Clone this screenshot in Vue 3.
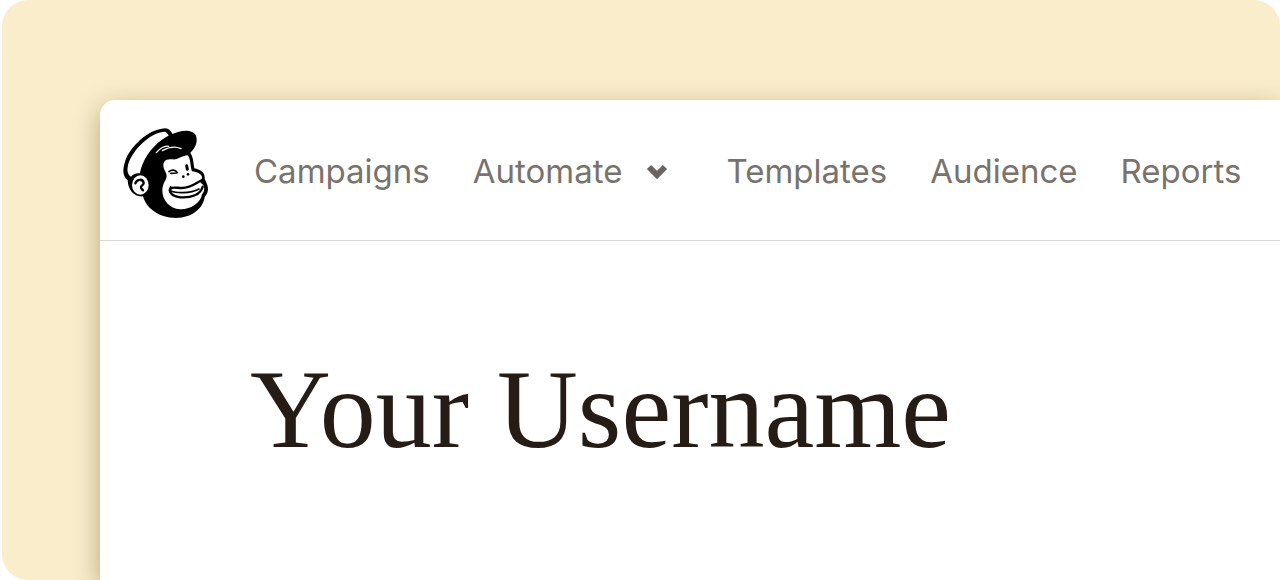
<template>
  <div class="backdrop">
    <div class="window">
      <header class="topbar">
        <a href="#" class="brand" aria-label="Home">
          <svg class="brand-logo" viewBox="0 0 300 315" aria-hidden="true">
            <!-- Head and cap -->
            <path
              d="M150 25C161 25 168 34 173 42C197 30 233 26 243 47C250 68 238 87 226 98C236 114 235 131 238 145C254 149 270 156 269 173C268 180 280 191 279 209C278 221 271 227 269 232C264 262 235 294 182 294C136 294 94 267 84 229C59 232 39 212 38 181C23 168 22 150 30 125C44 82 98 28 150 25Z"
            />
            <!-- Cap band -->
            <path
              fill="#fff"
              d="M147 35C154 35 159 41 161 47C126 63 84 108 75 160C63 158 54 163 48 170C36 163 35 148 41 128C54 91 102 39 147 35Z"
            />
            <path class="light" d="M124 98C137 83 151 77 161 79M142 92C158 83 180 78 198 86" />
            <!-- Face -->
            <path
              fill="#fff"
              d="M146 143C142 126 151 116 170 118C190 121 201 106 218 106C228 117 225 137 231 154C246 156 260 162 261 172C261 180 252 184 258 190C270 195 271 215 261 223C258 248 228 269 195 268C164 266 141 240 142 210C143 191 151 184 154 174C158 160 148 153 146 143Z"
            />
            <!-- Ear -->
            <ellipse cx="76" cy="195" rx="25" ry="29" fill="#fff" />
            <path class="line" d="M61 190C65 176 84 176 86 189C86 196 78 196 78 201C77 207 82 207 84 211" />
            <!-- Eyes and nose -->
            <path class="line thin" d="M162 155C170 148 182 149 187 158M168 160L184 159" />
            <path class="line eye" d="M215 137L217 148" />
            <circle cx="205" cy="170" r="4" />
            <circle cx="219" cy="163" r="4" />
            <!-- Mouth -->
            <path class="line" d="M261 180C245 188 226 205 198 204C187 204 174 200 168 205C159 216 172 230 197 232C229 234 257 224 263 200" />
            <path class="line thin" d="M168 213C182 219 224 222 252 207M167 200L163 211" />
          </svg>
        </a>
        <nav class="menu">
          <template v-for="item in items" :key="item.label">
            <button v-if="item.dropdown" type="button" class="menu-item menu-dropdown">
              {{ item.label }}
              <svg class="chevron" viewBox="0 0 22 16" aria-hidden="true">
                <path d="M3 4L11 12L19 4" />
              </svg>
            </button>
            <a v-else href="#" class="menu-item">{{ item.label }}</a>
          </template>
        </nav>
      </header>
      <main class="content">
        <h1 class="username">Your Username</h1>
      </main>
    </div>
  </div>
</template>

<script setup>
const items = [
  { label: 'Campaigns' },
  { label: 'Automate', dropdown: true },
  { label: 'Templates' },
  { label: 'Audience' },
  { label: 'Reports' }
]
</script>

<style>
body {
  background: #fff;
}
</style>

<style scoped>
.backdrop {
  box-sizing: border-box;
  display: flex;
  min-height: 100vh;
  margin-left: 2px;
  padding: 100px 0 0 98px;
  background: #faedcb;
  border-radius: 26px 26px 0 26px;
  overflow: hidden;
}

.window {
  flex: 1;
  min-width: 0;
  background: #fff;
  border-top-left-radius: 15px;
  box-shadow: 0 8px 27px rgba(60, 50, 10, 0.38);
}

.topbar {
  display: flex;
  align-items: center;
  gap: 39px;
  height: 136px;
  padding: 4px 0 0 15px;
  border-bottom: 1px solid #d9d9d9;
}

.brand {
  flex-shrink: 0;
  color: #000;
}

.brand-logo {
  display: block;
  width: 100px;
  height: 105px;
}

.line,
.light {
  fill: none;
  stroke: #000;
  stroke-width: 7;
  stroke-linecap: round;
  stroke-linejoin: round;
}

.light {
  stroke: #fff;
  stroke-width: 4;
}

.thin {
  stroke-width: 5;
}

.eye {
  stroke-width: 9;
}

.menu {
  display: flex;
  align-items: center;
  gap: 43px;
  padding-bottom: 2px;
}

.menu-item {
  padding: 0;
  border: 0;
  background: none;
  color: #79736d;
  font-family: Inter, sans-serif;
  font-size: 33px;
  line-height: 40px;
  text-decoration: none;
  white-space: nowrap;
}

.menu-dropdown {
  display: flex;
  align-items: center;
  gap: 24px;
  margin-right: 15px;
  cursor: pointer;
}

.chevron {
  width: 22px;
  height: 16px;
  fill: none;
  stroke: #6b645e;
  stroke-width: 6;
}

.content {
  padding: 104px 150px 60px;
}

.username {
  margin: 0;
  color: #241c15;
  font-family: 'Liberation Serif', serif;
  font-size: 112px;
  font-weight: 400;
  line-height: 128px;
}
</style>
